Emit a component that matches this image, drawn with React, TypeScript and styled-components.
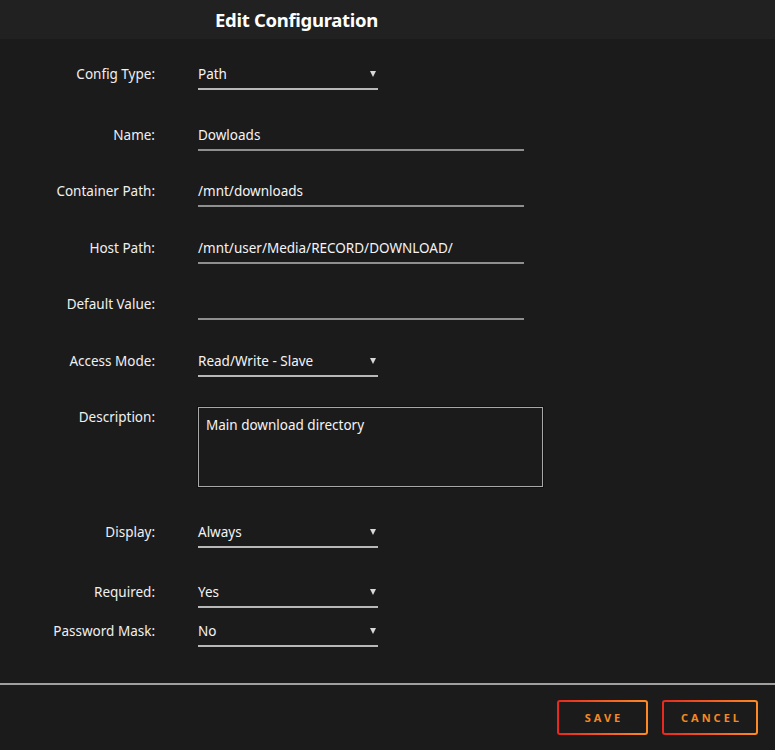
import React from "react";
import styled, { createGlobalStyle } from "styled-components";

const Global = createGlobalStyle`
  html, body { margin: 0; padding: 0; background: #1c1b1c; }
  body { font-family: "Noto Sans", "DejaVu Sans", sans-serif; color: #f2f2f2; }
`;

const Page = styled.div`
  width: 775px;
  height: 750px;
  background: #1c1b1c;
  display: flex;
  flex-direction: column;
  overflow: hidden;
`;

const Header = styled.div`
  height: 39px;
  background: #212121;
  display: flex;
  align-items: center;
  padding-left: 215px;
  box-sizing: border-box;
`;

const Title = styled.h1`
  margin: 0;
  font-size: 18.5px;
  font-weight: 700;
  color: #ffffff;
  letter-spacing: -0.3px;
`;

const Form = styled.div`
  display: flex;
  flex-direction: column;
  padding-top: 26px;
  flex: 1;
`;

const Row = styled.div<{ $mt: number }>`
  display: grid;
  grid-template-columns: 155px 1fr;
  column-gap: 43px;
  margin-top: ${(p) => p.$mt}px;
  align-items: start;
`;

const Label = styled.label<{ $pt?: number }>`
  text-align: right;
  font-size: 13.5px;
  line-height: 18px;
  color: #f0f0f0;
  padding-top: ${(p) => p.$pt ?? 0}px;
  white-space: nowrap;
`;

const Field = styled.div<{ $w: number; $select?: boolean }>`
  width: ${(p) => p.$w}px;
  height: 23px;
  box-sizing: content-box;
  border-bottom: 2px solid ${(p) => (p.$select ? "#b8b8b8" : "#8f8f8f")};
  display: flex;
  justify-content: space-between;
  font-size: 13.5px;
  line-height: 18px;
  color: #f4f4f4;
  white-space: nowrap;
`;

const Arrow = styled.span`
  width: 0;
  height: 0;
  margin-top: 6px;
  margin-right: 2px;
  border-left: 3px solid transparent;
  border-right: 3px solid transparent;
  border-top: 6px solid #d8d8d8;
`;

const TextArea = styled.div`
  width: 345px;
  height: 80px;
  box-sizing: border-box;
  border: 1px solid #a8a8a8;
  box-shadow: 0 0 0 1px #111;
  padding: 8px 7px;
  font-size: 13.5px;
  line-height: 18px;
  color: #f4f4f4;
`;

const Footer = styled.div`
  border-top: 2px solid #a0a0a0;
  margin-top: auto;
  height: 67px;
  box-sizing: border-box;
  display: flex;
  justify-content: flex-end;
  align-items: flex-start;
  padding: 15px 17px 0 0;
  gap: 14px;
`;

const Button = styled.button<{ $w: number }>`
  width: ${(p) => p.$w}px;
  height: 35px;
  border: 2px solid transparent;
  border-radius: 3px;
  background: linear-gradient(#1c1b1c, #1c1b1c) padding-box,
    linear-gradient(90deg, #e8281f, #ff8a24) border-box;
  color: #f58a23;
  font-family: "Noto Sans", "DejaVu Sans", sans-serif;
  font-weight: 700;
  font-size: 11px;
  letter-spacing: 3px;
  padding: 0 0 0 3px;
  cursor: pointer;
`;

type RowDef = {
  label: string;
  value: string;
  kind: "select" | "input" | "area";
  mt: number;
};

const rows: RowDef[] = [
  { label: "Config Type:", value: "Path", kind: "select", mt: 0 },
  { label: "Name:", value: "Dowloads", kind: "input", mt: 36 },
  { label: "Container Path:", value: "/mnt/downloads", kind: "input", mt: 31 },
  { label: "Host Path:", value: "/mnt/user/Media/RECORD/DOWNLOAD/", kind: "input", mt: 32 },
  { label: "Default Value:", value: "", kind: "input", mt: 31 },
  { label: "Access Mode:", value: "Read/Write - Slave", kind: "select", mt: 32 },
  { label: "Description:", value: "Main download directory", kind: "area", mt: 30 },
  { label: "Display:", value: "Always", kind: "select", mt: 36 },
  { label: "Required:", value: "Yes", kind: "select", mt: 35 },
  { label: "Password Mask:", value: "No", kind: "select", mt: 14 },
];

export default function App() {
  return (
    <Page>
      <Global />
      <Header>
        <Title>Edit Configuration</Title>
      </Header>
      <Form>
        {rows.map((r) => (
          <Row key={r.label} $mt={r.mt}>
            <Label $pt={r.kind === "area" ? 1 : 0}>{r.label}</Label>
            {r.kind === "area" ? (
              <TextArea>{r.value}</TextArea>
            ) : r.kind === "select" ? (
              <Field $w={180} $select>
                <span>{r.value}</span>
                <Arrow />
              </Field>
            ) : (
              <Field $w={326}>
                <span>{r.value}</span>
              </Field>
            )}
          </Row>
        ))}
        <Footer>
          <Button $w={91}>SAVE</Button>
          <Button $w={96}>CANCEL</Button>
        </Footer>
      </Form>
    </Page>
  );
}
